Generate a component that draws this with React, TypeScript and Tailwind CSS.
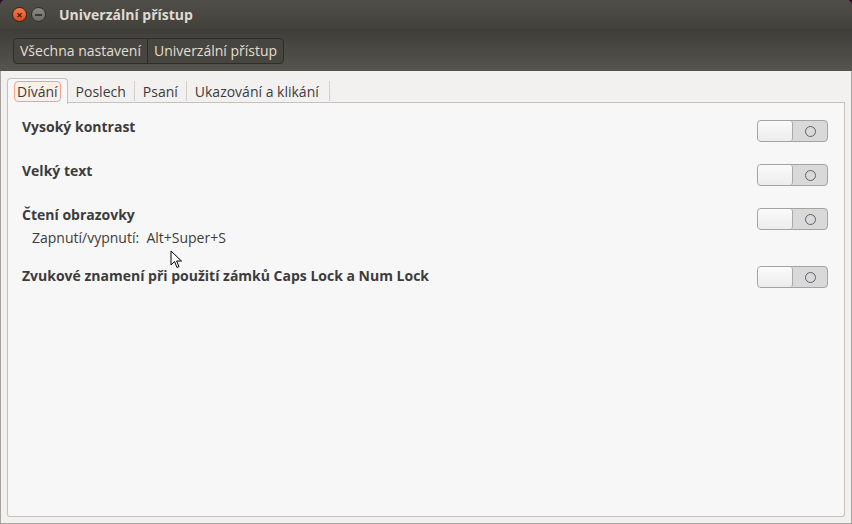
import React from "react";

function Switch() {
  return (
    <div className="flex h-[22px] w-[71px] overflow-hidden rounded-[4px] border border-[#a3a3a3] bg-[#d9d9d9]">
      <div className="h-full w-[35px] rounded-[3px] border-r border-[#a8a8a8] bg-gradient-to-b from-[#fbfbfb] to-[#ececec]" />
      <div className="flex flex-1 items-center justify-center">
        <div className="h-[11px] w-[11px] rounded-full border border-[#5f6170]" />
      </div>
    </div>
  );
}

export default function App() {
  return (
    <div className="h-[524px] w-[852px] bg-[#300a24] font-['Open_Sans',sans-serif]">
      <div className="flex h-full w-full flex-col overflow-hidden rounded-t-[5px]">
        {/* Title bar */}
        <div className="flex h-[29px] items-center bg-gradient-to-b from-[#504e48] to-[#43413c]">
          <div className="ml-[12px] flex h-[15px] w-[15px] items-center justify-center rounded-full border border-[#3a2016] bg-gradient-to-b from-[#f57b4a] to-[#dd4c1a] text-[11px] font-bold leading-none text-[#3a1a0e]">
            ×
          </div>
          <div className="ml-[4px] flex h-[15px] w-[15px] items-center justify-center rounded-full border border-[#2f2e2b] bg-gradient-to-b from-[#8c8a84] to-[#6e6c66]">
            <div className="h-[2px] w-[7px] bg-[#3a3935]" />
          </div>
          <div className="ml-[13px] text-[14px] font-bold text-[#dfdbd2]">Univerzální přístup</div>
        </div>
        {/* Toolbar */}
        <div className="flex h-[42px] items-center border-t border-[#3c3b37] bg-gradient-to-b from-[#3f3e3a] to-[#57554f] pl-[13px]">
          <div className="flex h-[26px] overflow-hidden rounded-[4px] border border-[#2e2d29] bg-[#47453f] text-[14px] text-[#e2ded6]">
            <div className="flex items-center border-r border-[#2e2d29] px-[6px]">Všechna nastavení</div>
            <div className="flex items-center px-[6px]">Univerzální přístup</div>
          </div>
        </div>
        {/* Content */}
        <div className="flex flex-1 flex-col border-x border-b border-[#a6a49f] bg-[#f2f1f0] px-[6px] pb-[6px] pt-[6px]">
          {/* Tabs */}
          <div className="flex h-[26px] items-end text-[14px] text-[#3c3c3c]">
            <div className="relative z-10 -mb-px flex h-[26px] items-center rounded-t-[4px] border border-b-0 border-[#c5c2bc] bg-[#f7f7f7] px-[6px]">
              <div className="flex h-[21px] items-center rounded-[4px] border border-[#eda58c] bg-[#fbefea] px-[2px]">Dívání</div>
            </div>
            <div className="flex h-[26px] flex-1 items-end border-b border-[#c5c2bc]">
              <div className="mb-[1px] flex h-[20px] items-center border-r border-[#d3d0ca] px-[8px]">Poslech</div>
              <div className="mb-[1px] flex h-[20px] items-center border-r border-[#d3d0ca] px-[8px]">Psaní</div>
              <div className="mb-[1px] flex h-[20px] items-center border-r border-[#d3d0ca] pl-[8px] pr-[10px]">Ukazování a klikání</div>
            </div>
          </div>
          {/* Panel */}
          <div className="relative flex flex-1 flex-col rounded-b-[3px] border border-t-0 border-[#c5c2bc] bg-[#f7f7f7] pl-[14px] pr-[16px] pt-[14px] text-[14px] text-[#3c3c3c]">
            <div className="flex h-[44px] items-start justify-between">
              <div className="font-bold leading-[20px]">Vysoký kontrast</div>
              <div className="mt-[3px]"><Switch /></div>
            </div>
            <div className="flex h-[44px] items-start justify-between">
              <div className="font-bold leading-[20px]">Velký text</div>
              <div className="mt-[3px]"><Switch /></div>
            </div>
            <div className="flex h-[58px] items-start justify-between">
              <div>
                <div className="font-bold leading-[20px]">Čtení obrazovky</div>
                <div className="ml-[10px] mt-[3px] leading-[20px]">Zapnutí/vypnutí:&nbsp;&nbsp;Alt+Super+S</div>
              </div>
              <div className="mt-[3px]"><Switch /></div>
            </div>
            <div className="flex h-[44px] items-start justify-between">
              <div className="mt-[3px] font-bold leading-[20px]">Zvukové znamení při použití zámků Caps Lock a Num Lock</div>
              <div className="mt-[3px]"><Switch /></div>
            </div>
            {/* mouse cursor */}
            <svg className="absolute left-[162px] top-[147px]" width="13" height="20" viewBox="0 0 13 20">
              <path d="M1 1 L1 15 L4.5 11.5 L7 17.5 L9 16.6 L6.6 11 L11.5 11 Z" fill="#ffffff" stroke="#000000" strokeWidth="1" strokeLinejoin="round" />
            </svg>
          </div>
        </div>
      </div>
    </div>
  );
}
